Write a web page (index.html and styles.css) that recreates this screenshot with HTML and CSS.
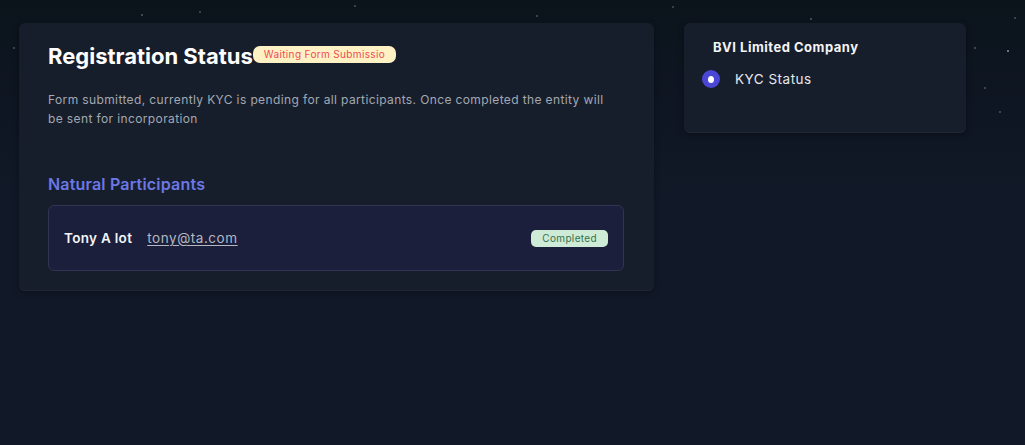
FILE: index.html
```html
<!DOCTYPE html>
<html lang="en">
<head>
<meta charset="utf-8">
<title>Registration Status</title>
<link rel="stylesheet" href="styles.css">
</head>
<body>
<div class="page">
  <section class="card main">
    <div class="title-row">
      <h1 class="title">Registration Status</h1>
      <span class="badge badge-waiting">Waiting Form Submissio</span>
    </div>
    <p class="desc">Form submitted, currently KYC is pending for all participants. Once completed the entity will be sent for incorporation</p>
    <h2 class="section-title">Natural Participants</h2>
    <div class="participant">
      <span class="p-name">Tony A lot</span>
      <a class="p-email" href="#">tony@ta.com</a>
      <span class="badge badge-done">Completed</span>
    </div>
  </section>
  <aside class="card side">
    <h3 class="side-title">BVI Limited Company</h3>
    <div class="step">
      <span class="radio"></span>
      <span class="step-label">KYC Status</span>
    </div>
  </aside>
</div>
</body>
</html>
```
FILE: styles.css
```css
* { box-sizing: border-box; }
html, body { margin: 0; height: 100%; }
body {
  font-family: "Inter", "DejaVu Sans", sans-serif;
  color: #f3f4f6;
  background-color: #111827;
  background-image:
    radial-gradient(circle at 30px 36px, rgba(160,170,185,0.35) 0 0.8px, transparent 1.3px),
    radial-gradient(circle at 142px 15px, rgba(160,170,185,0.35) 0 0.8px, transparent 1.3px),
    radial-gradient(circle at 200px 12px, rgba(160,170,185,0.3) 0 0.8px, transparent 1.3px),
    radial-gradient(circle at 355px 6px, rgba(160,170,185,0.3) 0 0.8px, transparent 1.3px),
    radial-gradient(circle at 537px 16px, rgba(160,170,185,0.3) 0 0.8px, transparent 1.3px),
    radial-gradient(circle at 673px 7px, rgba(160,170,185,0.3) 0 0.8px, transparent 1.3px),
    radial-gradient(circle at 811px 19px, rgba(160,170,185,0.35) 0 0.8px, transparent 1.3px),
    radial-gradient(circle at 1008px 51px, rgba(200,210,220,0.5) 0 1px, transparent 1.5px),
    radial-gradient(circle at 975px 48px, rgba(160,170,185,0.35) 0 0.8px, transparent 1.3px),
    radial-gradient(circle at 1000px 112px, rgba(160,170,185,0.3) 0 0.8px, transparent 1.3px),
    radial-gradient(circle at 1015px 18px, rgba(160,170,185,0.3) 0 0.8px, transparent 1.3px),
    radial-gradient(circle at 985px 88px, rgba(160,170,185,0.3) 0 0.8px, transparent 1.3px),
    radial-gradient(circle at 14px 48px, rgba(160,170,185,0.3) 0 0.8px, transparent 1.3px),
    linear-gradient(180deg, #0b131b 0px, #0d1520 60px, #111827 200px);
  background-repeat: no-repeat;
}
.page {
  display: flex;
  align-items: flex-start;
  gap: 30px;
  padding: 23px 19px;
}
.card {
  background: #171e2b;
  border-radius: 6px;
  box-shadow: 0 1px 0 rgba(40,48,64,0.7), 0 2px 6px rgba(0,0,0,0.35);
}
.main {
  width: 635px;
  padding: 20px 30px 19px 29px;
}
.title-row {
  display: flex;
  align-items: center;
}
.title {
  margin: 0;
  font-size: 22px;
  font-weight: 700;
  line-height: 26px;
  color: #ffffff;
  letter-spacing: 0;
}
.badge {
  display: inline-block;
  border-radius: 7px;
  font-size: 10px;
  line-height: 17px;
  padding: 0 10px;
  white-space: nowrap;
  letter-spacing: 0.35px;
}
.badge-waiting {
  background: #fef2c4;
  color: #ef4b55;
  margin-top: -4px;
  padding: 0 11px;
}
.desc {
  margin: 21px 0 0;
  font-size: 12px;
  line-height: 19px;
  color: #a3a8b2;
  letter-spacing: 0.38px;
  max-width: 565px;
}
.section-title {
  margin: 46px 0 0;
  font-size: 16px;
  font-weight: 600;
  line-height: 20px;
  letter-spacing: 0.2px;
  color: #6b78e5;
}
.participant {
  margin-top: 11px;
  display: flex;
  align-items: center;
  gap: 15px;
  height: 66px;
  padding: 0 15px;
  background: #1b1f3b;
  border: 1px solid #2f3553;
  border-radius: 6px;
}
.p-name {
  font-size: 13.5px;
  font-weight: 600;
  letter-spacing: 0.3px;
  color: #f3f4f6;
}
.p-email {
  font-size: 13.5px;
  color: #b4b8c2;
  letter-spacing: 0.55px;
  text-decoration: underline;
  text-underline-offset: 2px;
}
.badge-done {
  margin-left: auto;
  background: #cdebd6;
  color: #35714a;
  border-radius: 5px;
  padding: 0 11px;
}
.side {
  width: 282px;
  height: 109px;
  padding: 15px 18px 0 18px;
}
.side-title {
  margin: 0 0 0 11px;
  font-size: 13px;
  font-weight: 700;
  line-height: 18px;
  letter-spacing: 0.5px;
  color: #f3f4f6;
}
.step {
  margin-top: 14px;
  display: flex;
  align-items: center;
  gap: 15px;
}
.radio {
  width: 18px;
  height: 18px;
  border-radius: 50%;
  background: #4a46d6;
  display: flex;
  align-items: center;
  justify-content: center;
}
.radio::after {
  content: "";
  width: 6px;
  height: 7px;
  border-radius: 50%;
  background: #ffffff;
}
.step-label {
  font-size: 13.5px;
  line-height: 18px;
  letter-spacing: 0.5px;
  color: #e5e7eb;
}
```
